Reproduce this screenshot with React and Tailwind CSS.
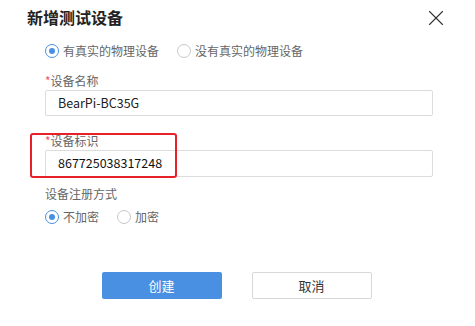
import { X } from 'lucide-react';

function Radio({ checked, label }) {
  return (
    <label className="flex items-center gap-[4px] h-[20px]">
      <span
        className={
          'w-[14px] h-[14px] rounded-full border flex items-center justify-center ' +
          (checked ? 'border-[#4a90e2]' : 'border-[#c8c8c8]')
        }
      >
        {checked && <span className="w-[6px] h-[6px] rounded-full bg-[#4a90e2]" />}
      </span>
      <span className="text-[12px] text-[#666] leading-[20px]">{label}</span>
    </label>
  );
}

export default function App() {
  return (
    <div
      className="relative w-[475px] h-[326px] bg-white overflow-hidden"
      style={{ fontFamily: '"Noto Sans CJK SC", "Microsoft YaHei", sans-serif' }}
    >
      <div className="flex items-center justify-between pl-[27px] pr-[26px] pt-[3px] h-[30px]">
        <h2 className="text-[16px] font-bold text-[#222] leading-[24px]">新增测试设备</h2>
        <X size={26} strokeWidth={1} className="text-[#333] mt-[3px]" />
      </div>

      <div className="pl-[45px] pr-[42px]">
        <div className="flex gap-[18px] mt-[11px]">
          <Radio checked label="有真实的物理设备" />
          <Radio label="没有真实的物理设备" />
        </div>

        <div className="mt-[11px] text-[12px] leading-[18px] text-[#666]">
          <span className="text-[#f0506e]">*</span>设备名称
        </div>
        <div className="h-[26px] border border-[#dcdcdc] rounded-[2px] flex items-center px-[12px] text-[12.5px] text-[#222]">
          BearPi-BC35G
        </div>

        <div className="mt-[16px] text-[12px] leading-[18px] text-[#666]">
          <span className="text-[#f0506e]">*</span>设备标识
        </div>
        <div className="h-[27px] border border-[#dcdcdc] rounded-[2px] flex items-center px-[12px] text-[12.5px] text-[#111]">
          867725038317248
        </div>

        <div className="mt-[8px] text-[12px] leading-[18px] text-[#666]">设备注册方式</div>
        <div className="flex gap-[18px] mt-[4px]">
          <Radio checked label="不加密" />
          <Radio label="加密" />
        </div>
      </div>

      <div className="flex justify-center gap-[30px] mt-[45px] pr-[2px]">
        <button className="w-[120px] h-[27px] rounded-[2px] bg-[#4a90e2] text-white text-[13px]">创建</button>
        <button className="w-[120px] h-[27px] rounded-[2px] border border-[#d8d8d8] bg-white text-[#333] text-[13px]">取消</button>
      </div>

      <div className="absolute left-[30px] top-[133px] w-[147px] h-[45px] border-[2.5px] border-[#e8202a] rounded-[3px] pointer-events-none" />
    </div>
  );
}
